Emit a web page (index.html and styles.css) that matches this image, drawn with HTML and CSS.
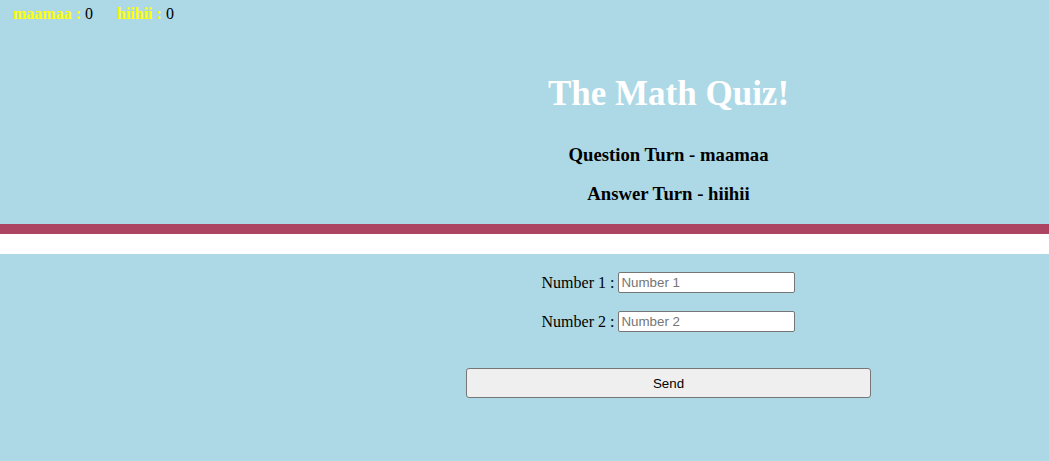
FILE: index.html
```html
<!DOCTYPE html>
<html>
<head>
<meta charset="utf-8">
<link rel="stylesheet" href="styles.css">
</head>
<body>
<div class="scores">
  <span class="score"><b class="name">maamaa :</b> 0</span>
  <span class="score"><b class="name">hiihii :</b> 0</span>
</div>
<header class="layout">
  <div class="side"></div>
  <div class="main">
    <h1 class="title">The Math Quiz!</h1>
    <h3 class="turn">Question Turn - maamaa</h3>
    <h3 class="turn">Answer Turn - hiihii</h3>
  </div>
</header>
<div class="stripe-dark"></div>
<div class="stripe-light"></div>
<section class="layout">
  <div class="side"></div>
  <form class="main form">
    <div class="row"><label>Number 1 : </label><input class="field" type="text" placeholder="Number 1"></div>
    <div class="row"><label>Number 2 : </label><input class="field" type="text" placeholder="Number 2"></div>
    <div class="row send-row"><button class="send" type="button">Send</button></div>
  </form>
</section>
</body>
</html>
```
FILE: styles.css
```css
html, body {
  margin: 0;
  padding: 0;
}
body {
  background: #add8e6;
  font-family: "Liberation Serif", "Times New Roman", serif;
  font-size: 16px;
  color: #000;
  height: 461px;
}
.scores {
  display: flex;
  gap: 24px;
  padding: 5px 13px 0;
  height: 18px;
  line-height: 18px;
}
.name {
  color: #ffff00;
}
.layout {
  display: grid;
  grid-template-columns: 288px 1fr;
}
.main {
  text-align: center;
}
.title {
  color: #fff;
  font-size: 35px;
  margin: 52px 0 0;
  line-height: 38px;
}
.turn {
  font-size: 18.72px;
  line-height: 22px;
  margin: 31px 0 0;
}
.turn + .turn {
  margin-top: 17px;
}
header .main {
  padding-bottom: 19px;
}
.stripe-dark {
  height: 10px;
  background: #ab4562;
}
.stripe-light {
  height: 20px;
  background: #fff;
}
.form {
  display: flex;
  flex-direction: column;
  align-items: center;
  padding-top: 18px;
}
.row {
  display: flex;
  align-items: center;
  height: 21px;
  margin-bottom: 18px;
}
.row label {
  margin-right: 4px;
}
.field {
  width: 177px;
  height: 21px;
  box-sizing: border-box;
  border: 1px solid #767676;
  border-radius: 2px;
  padding: 1px 2px;
  font-family: "Liberation Sans", Arial, sans-serif;
  font-size: 13.33px;
  background: #fff;
}
.field::placeholder {
  color: #757575;
}
.send-row {
  height: 30px;
  margin-top: 18px;
}
.send {
  width: 405px;
  height: 30px;
  box-sizing: border-box;
  background: #efefef;
  border: 1px solid #767676;
  border-radius: 3px;
  font-family: "Liberation Sans", Arial, sans-serif;
  font-size: 13.33px;
  color: #000;
}
```
